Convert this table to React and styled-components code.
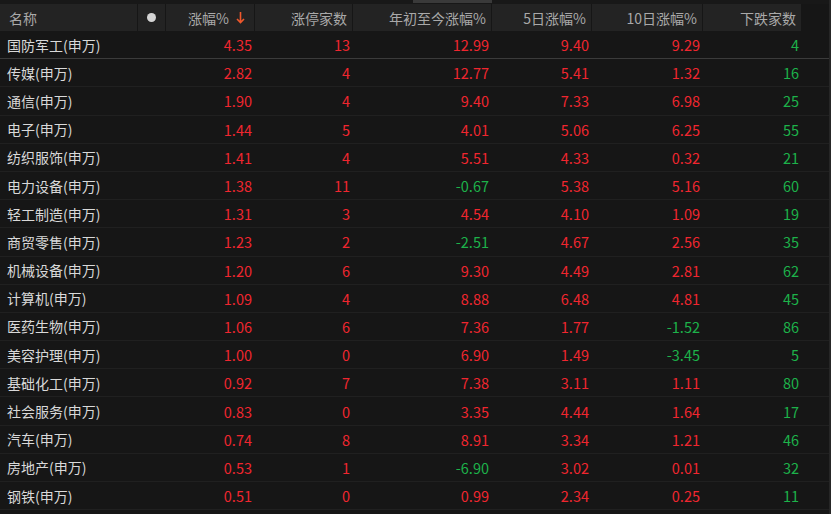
import React from "react";
import styled, { createGlobalStyle } from "styled-components";

const Global = createGlobalStyle`
  html, body { margin: 0; padding: 0; background: #161616; }
  body { font-family: "Noto Sans CJK SC", "Noto Sans", sans-serif; }
`;

const COLS = "138px 28px 89px 98px 139px 100px 111px 99px 1fr";

const Page = styled.div`
  width: 831px;
  height: 514px;
  background: #161616;
  display: flex;
  flex-direction: column;
  overflow: hidden;
  border-right: 2px solid #262626;
  box-sizing: border-box;
`;

const TopStrip = styled.div`
  height: 4px;
  display: flex;
  padding-left: 413px;
  background: #181818;
`;

const Thumb = styled.div`
  width: 79px;
  height: 3px;
  background: #3a3a3a;
`;

const HeaderRow = styled.div`
  display: grid;
  grid-template-columns: ${COLS};
  height: 27px;
  background: #161616;
`;

const HeadCell = styled.div`
  display: flex;
  align-items: center;
  justify-content: ${(p) => (p.$left ? "flex-start" : p.$center ? "center" : "flex-end")};
  padding: ${(p) => (p.$left ? "0 0 0 9px" : p.$center ? "0" : "0 5px 0 0")};
  background: ${(p) => (p.$empty ? "#161616" : "#232323")};
  margin-right: ${(p) => (p.$empty ? "0" : "1px")};
  color: #a9a9a9;
  font-size: 14px;
  white-space: nowrap;
`;

const Dot = styled.span`
  width: 9px;
  height: 9px;
  border-radius: 50%;
  background: #d4d4d4;
`;

const ArrowIcon = styled.svg`
  margin-left: 7px;
  margin-right: 4px;
  flex: none;
`;

const Body = styled.div`
  display: flex;
  flex-direction: column;
`;

const Row = styled.div`
  display: grid;
  grid-template-columns: ${COLS};
  height: 28.2px;
  box-sizing: border-box;
  border-bottom: 1px solid ${(p) => (p.$first ? "#3b3b3b" : "#202020")};
  background: #161616;
`;

const NameCell = styled.div`
  display: flex;
  align-items: center;
  padding-left: 7px;
  color: #d9d9d9;
  font-size: 14px;
  white-space: nowrap;
`;

const NumCell = styled.div`
  display: flex;
  align-items: center;
  justify-content: flex-end;
  padding-right: 3px;
  font-size: 14.5px;
  color: ${(p) => (p.$up ? "#f0262f" : "#1db24a")};
`;

const rows = [
  ["国防军工(申万)", "4.35", "13", "12.99", "9.40", "9.29", "4"],
  ["传媒(申万)", "2.82", "4", "12.77", "5.41", "1.32", "16"],
  ["通信(申万)", "1.90", "4", "9.40", "7.33", "6.98", "25"],
  ["电子(申万)", "1.44", "5", "4.01", "5.06", "6.25", "55"],
  ["纺织服饰(申万)", "1.41", "4", "5.51", "4.33", "0.32", "21"],
  ["电力设备(申万)", "1.38", "11", "-0.67", "5.38", "5.16", "60"],
  ["轻工制造(申万)", "1.31", "3", "4.54", "4.10", "1.09", "19"],
  ["商贸零售(申万)", "1.23", "2", "-2.51", "4.67", "2.56", "35"],
  ["机械设备(申万)", "1.20", "6", "9.30", "4.49", "2.81", "62"],
  ["计算机(申万)", "1.09", "4", "8.88", "6.48", "4.81", "45"],
  ["医药生物(申万)", "1.06", "6", "7.36", "1.77", "-1.52", "86"],
  ["美容护理(申万)", "1.00", "0", "6.90", "1.49", "-3.45", "5"],
  ["基础化工(申万)", "0.92", "7", "7.38", "3.11", "1.11", "80"],
  ["社会服务(申万)", "0.83", "0", "3.35", "4.44", "1.64", "17"],
  ["汽车(申万)", "0.74", "8", "8.91", "3.34", "1.21", "46"],
  ["房地产(申万)", "0.53", "1", "-6.90", "3.02", "0.01", "32"],
  ["钢铁(申万)", "0.51", "0", "0.99", "2.34", "0.25", "11"],
];

export default function App() {
  return (
    <>
      <Global />
      <Page>
        <TopStrip>
          <Thumb />
        </TopStrip>
        <HeaderRow>
          <HeadCell $left>名称</HeadCell>
          <HeadCell $center>
            <Dot />
          </HeadCell>
          <HeadCell>
            涨幅%
            <ArrowIcon width="9" height="13" viewBox="0 0 9 13">
              <path
                d="M4.5 1 V11.5 M1 8 L4.5 11.5 L8 8"
                fill="none"
                stroke="#f0582c"
                strokeWidth="1.6"
              />
            </ArrowIcon>
          </HeadCell>
          <HeadCell>涨停家数</HeadCell>
          <HeadCell>年初至今涨幅%</HeadCell>
          <HeadCell>5日涨幅%</HeadCell>
          <HeadCell>10日涨幅%</HeadCell>
          <HeadCell>下跌家数</HeadCell>
          <HeadCell $empty />
        </HeaderRow>
        <Body>
          {rows.map((r, i) => (
            <Row key={r[0]} $first={i === 0}>
              <NameCell>{r[0]}</NameCell>
              <div />
              <NumCell $up>{r[1]}</NumCell>
              <NumCell $up>{r[2]}</NumCell>
              <NumCell $up={!r[3].startsWith("-")}>{r[3]}</NumCell>
              <NumCell $up={!r[4].startsWith("-")}>{r[4]}</NumCell>
              <NumCell $up={!r[5].startsWith("-")}>{r[5]}</NumCell>
              <NumCell>{r[6]}</NumCell>
              <div />
            </Row>
          ))}
        </Body>
      </Page>
    </>
  );
}
